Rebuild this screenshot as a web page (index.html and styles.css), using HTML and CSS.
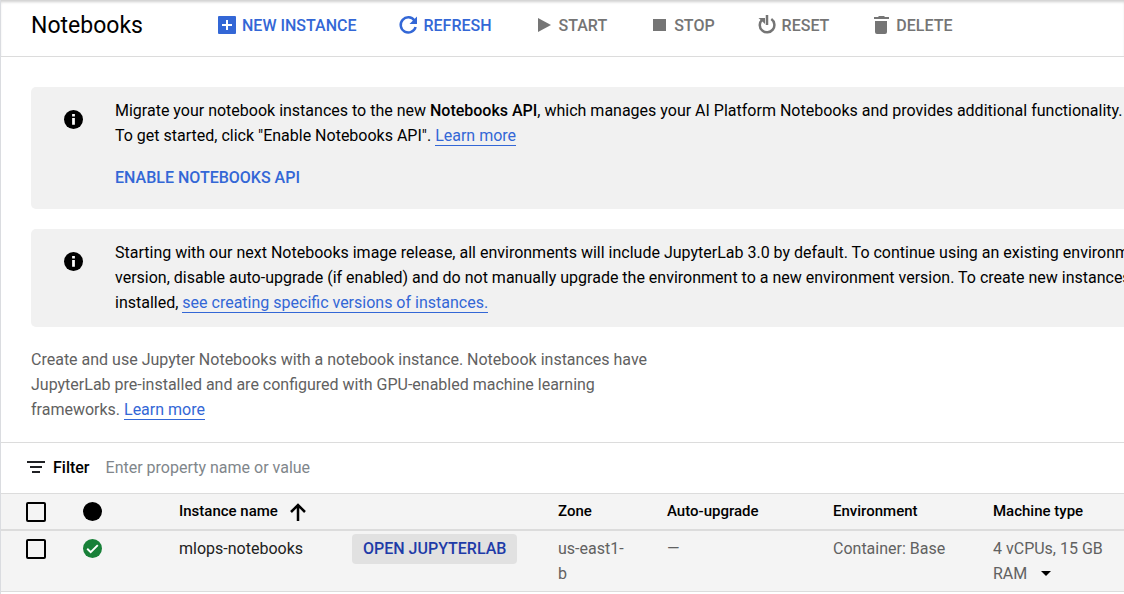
FILE: index.html
```html
<!DOCTYPE html>
<html lang="en">
<head>
<meta charset="utf-8">
<title>Notebooks</title>
<link rel="stylesheet" href="styles.css">
</head>
<body>
<div class="page">
  <header class="toolbar">
    <h1 class="title">Notebooks</h1>
    <div class="actions">
      <button type="button" class="action primary"><svg class="icon" viewBox="0 0 20 20"><rect x="1" y="1" width="18" height="18" rx="1" fill="currentColor"/><path d="M10 5v10M5 10h10" stroke="#fff" stroke-width="2"/></svg>NEW INSTANCE</button>
      <button type="button" class="action primary"><svg class="icon" viewBox="0 0 20 20"><path d="M16.500 5.500A7.600 7.600 0 1 0 17.600 12" fill="none" stroke="currentColor" stroke-width="2.500"/><path d="M19 1.500V9h-7.500z" fill="currentColor"/></svg>REFRESH</button>
      <button type="button" class="action"><svg class="icon" viewBox="0 0 20 20"><path d="M4 3l13 7-13 7z" fill="currentColor"/></svg>START</button>
      <button type="button" class="action"><svg class="icon" viewBox="0 0 20 20"><path d="M4 4h13v12H4z" fill="currentColor"/></svg>STOP</button>
      <button type="button" class="action"><svg class="icon" viewBox="0 0 20 20"><path d="M5 4.800A7.300 7.300 0 1 0 14.300 4.100" fill="none" stroke="currentColor" stroke-width="2.500"/><path d="M10 0v10" stroke="currentColor" stroke-width="2.500"/><path d="M1.500 3H8v6z" fill="currentColor"/></svg>RESET</button>
      <button type="button" class="action"><svg class="icon" viewBox="0 0 20 20"><path d="M3 2h4l1-1h5l1 1h4v2H3zM4 6h12v11a2 2 0 0 1-2 2H6a2 2 0 0 1-2-2z" fill="currentColor"/></svg>DELETE</button>
    </div>
  </header>

  <main>
    <section class="intro">
      <div class="banner">
        <svg class="info" viewBox="0 0 18 18"><circle cx="9" cy="9" r="9"/><path d="M7.700 3.800h2.600v2.400H7.700zM7.700 7.600h2.600v6.400H7.700z" fill="#fff"/></svg>
        <div class="message">
          <p>Migrate your notebook instances to the new <strong>Notebooks API</strong>, which manages your AI Platform Notebooks and provides additional functionality.<br>To get started, click "Enable Notebooks API". <a href="#">Learn more</a></p>
          <button type="button" class="enable">ENABLE NOTEBOOKS API</button>
        </div>
      </div>
      <div class="banner">
        <svg class="info" viewBox="0 0 18 18"><circle cx="9" cy="9" r="9"/><path d="M7.700 3.800h2.600v2.400H7.700zM7.700 7.600h2.600v6.400H7.700z" fill="#fff"/></svg>
        <div class="message">
          <p>Starting with our next Notebooks image release, all environments will include JupyterLab 3.0 by default. To continue using an existing environment<br>version, disable auto-upgrade (if enabled) and do not manually upgrade the environment to a new environment version. To create new instances<br>installed, <a href="#">see creating specific versions of instances.</a></p>
        </div>
      </div>
      <p class="summary">Create and use Jupyter Notebooks with a notebook instance. Notebook instances have JupyterLab pre-installed and are configured with GPU-enabled machine learning frameworks. <a href="#">Learn more</a></p>
    </section>

    <div class="filter">
      <svg class="filter-icon" viewBox="0 0 18 12"><path d="M0 1h18M3 6h12M5 11h8" stroke="#202124" stroke-width="2"/></svg>
      <label for="filter">Filter</label>
      <input id="filter" type="text" placeholder="Enter property name or value">
    </div>

    <table class="instances">
      <colgroup><col class="c-check"><col class="c-status"><col class="c-name"><col class="c-open"><col class="c-zone"><col class="c-auto"><col class="c-env"><col></colgroup>
      <thead>
        <tr>
          <th class="check"><input type="checkbox" aria-label="Select all instances"></th>
          <th><svg class="dot" viewBox="0 0 18 18" role="img" aria-label="Status"><circle cx="9" cy="9" r="9"/></svg></th>
          <th><span class="sort">Instance name <svg class="arrow" viewBox="0 0 16 18"><path d="M8 18V2M1 9l7-7 7 7" fill="none" stroke="#000" stroke-width="2.500"/></svg></span></th>
          <th></th>
          <th>Zone</th>
          <th>Auto-upgrade</th>
          <th>Environment</th>
          <th>Machine type</th>
        </tr>
      </thead>
      <tbody>
        <tr>
          <td class="check"><input type="checkbox" aria-label="Select mlops-notebooks"></td>
          <td><svg class="dot" viewBox="0 0 18 18" role="img" aria-label="Running"><circle cx="9" cy="9" r="9" fill="#188038"/><path d="M4 9.200l3.300 3.300 6.700-6.700" fill="none" stroke="#fff" stroke-width="1.800"/></svg></td>
          <td class="name">mlops-notebooks</td>
          <td class="open-cell"><button type="button" class="open">OPEN JUPYTERLAB</button></td>
          <td>us-east1-<br>b</td>
          <td>—</td>
          <td>Container: Base</td>
          <td>4 vCPUs, 15 GB<br>RAM <button type="button" class="more" aria-label="Change machine type"><svg viewBox="0 0 10 5"><path d="M0 0h10L5 5z"/></svg></button></td>
        </tr>
      </tbody>
    </table>
  </main>
</div>
</body>
</html>
```
FILE: styles.css
```css
* { box-sizing: border-box; }

body {
  margin: 0;
  background: #fff;
  color: #000;
  font: 16px/25px Roboto, "Liberation Sans", sans-serif;
  overflow-x: hidden;
}

button, input { font: inherit; }

button {
  border: 0;
  padding: 0;
  background: none;
  white-space: nowrap;
  cursor: pointer;
}

p { margin: 0; }

a {
  color: #3367d6;
  text-decoration: none;
  border-bottom: 1px solid #3367d6;
}

.page {
  min-height: 100vh;
  border-left: 1px solid #dadce0;
  overflow: hidden;
}

.toolbar {
  display: flex;
  align-items: center;
  height: 57px;
  padding: 0 30px 6px;
  border-bottom: 1px solid #dcdcdc;
  box-shadow: inset 0 3px 3px -1px #d0d0d0;
}

.title {
  width: 186px;
  margin: 0;
  font-size: 23px;
  font-weight: 400;
}

.actions { display: flex; gap: 42px; }

.action {
  display: flex;
  align-items: center;
  gap: 5px;
  color: #757575;
  font-weight: 500;
}

.primary { color: #3367d6; }

.icon { width: 20px; height: 20px; }

.intro { padding: 30px 0 20px 30px; }

.banner {
  display: flex;
  gap: 32px;
  margin-bottom: 20px;
  padding: 11px 0 12px 33px;
  border-radius: 5px 0 0 5px;
  background: #f1f1f1;
  white-space: nowrap;
}

.info {
  flex: none;
  width: 19px;
  height: 19px;
  margin-top: 12px;
}

.banner strong { font-weight: 500; }

.enable {
  display: block;
  margin: 17px 0 7px;
  color: #3367d6;
  font-weight: 500;
}

.summary {
  max-width: 640px;
  color: #616161;
}

.filter {
  display: flex;
  align-items: center;
  height: 51px;
  padding: 0 0 2px 26px;
  border-top: 1px solid #dcdcdc;
}

.filter-icon {
  width: 18px;
  height: 12px;
  margin-right: 8px;
}

.filter label { font-weight: 500; }

.filter input {
  flex: 1;
  min-width: 0;
  margin-left: 16px;
  padding: 0;
  border: 0;
  outline: 0;
  background: none;
}

.filter input::placeholder { color: #80868b; }

.instances {
  width: 100%;
  table-layout: fixed;
  border-collapse: collapse;
  background: #f4f4f4;
  border-top: 1px solid #dcdcdc;
}

.c-check { width: 81px; }
.c-status { width: 97px; }
.c-name { width: 173px; }
.c-open { width: 206px; }
.c-zone { width: 109px; }
.c-auto { width: 166px; }
.c-env { width: 160px; }

.instances th, .instances td {
  padding: 0;
  text-align: left;
  vertical-align: top;
}

.instances th {
  height: 36px;
  padding-top: 5px;
  border-bottom: 2px solid #dcdcdc;
  font-size: 15px;
  font-weight: 500;
}

.instances td {
  padding: 5px 0;
  border-bottom: 1px solid #dcdcdc;
  color: #616161;
}

.instances .check { padding-left: 25px; }
.instances .name { color: #212121; }
.instances .open-cell { padding-top: 3px; }

.check input {
  appearance: none;
  display: block;
  width: 20px;
  height: 20px;
  margin: 3px 0 0;
  border: 2px solid #000;
  border-radius: 2px;
}

.dot {
  display: block;
  width: 19px;
  height: 19px;
  margin: 3px 0 0 1px;
}

.sort {
  display: flex;
  align-items: center;
  gap: 12px;
}

.arrow { width: 16px; height: 18px; }

.open {
  height: 30px;
  padding: 0 11px;
  border-radius: 4px;
  background: #e1e1e1;
  color: #1e3ba8;
  font-weight: 500;
}

.more { margin-left: 10px; }
.more svg { display: block; width: 10px; height: 5px; margin-bottom: 3px; }
```
